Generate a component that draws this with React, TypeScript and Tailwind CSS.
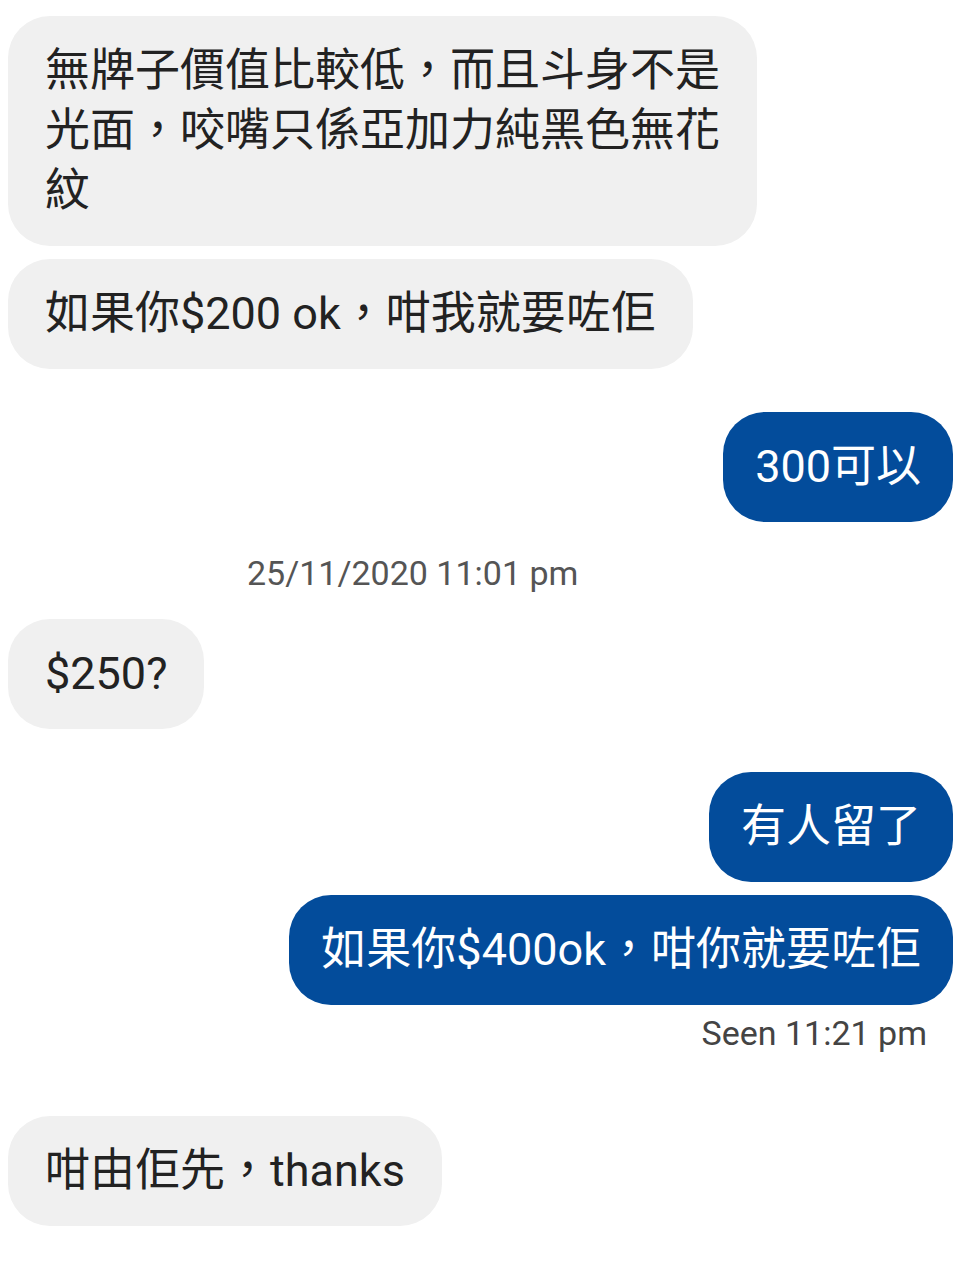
import React from 'react';

type Msg =
  | { kind: 'in' | 'out'; text: string; mt: string }
  | { kind: 'time'; text: string; mt: string }
  | { kind: 'seen'; text: string; mt: string };

const messages: Msg[] = [
  { kind: 'in', text: '無牌子價值比較低，而且斗身不是光面，咬嘴只係亞加力純黑色無花紋', mt: 'mt-0' },
  { kind: 'in', text: '如果你$200 ok，咁我就要咗佢', mt: 'mt-[13px]' },
  { kind: 'out', text: '300可以', mt: 'mt-[43px]' },
  { kind: 'time', text: '25/11/2020 11:01 pm', mt: 'mt-[31px]' },
  { kind: 'in', text: '$250?', mt: 'mt-[26px]' },
  { kind: 'out', text: '有人留了', mt: 'mt-[43px]' },
  { kind: 'out', text: '如果你$400ok，咁你就要咗佢', mt: 'mt-[13px]' },
  { kind: 'seen', text: 'Seen 11:21 pm', mt: 'mt-[8px]' },
  { kind: 'in', text: '咁由佢先，thanks', mt: 'mt-[63px]' },
];

const font = { fontFamily: 'Roboto, "Noto Sans CJK TC", sans-serif' };

export default function App() {
  return (
    <div className="min-h-[1274px] w-[977px] bg-white pt-[16px]" style={font}>
      <div className="flex flex-col">
        {messages.map((m, i) => {
          if (m.kind === 'time') {
            return (
              <div key={i} className={`${m.mt} pl-[247px] text-[34px] leading-[40px] text-[#555555]`}>
                {m.text}
              </div>
            );
          }
          if (m.kind === 'seen') {
            return (
              <div key={i} className={`${m.mt} self-end pr-[50px] text-[34px] leading-[40px] text-[#444444]`}>
                {m.text}
              </div>
            );
          }
          if (m.kind === 'in') {
            return (
              <div key={i} className={`${m.mt} ml-[8px] w-fit max-w-[749px] rounded-[42px] bg-[#f0f0f0] px-[37px] py-[25px] text-[45px] leading-[60px] text-[#222222]`}>
                {m.text}
              </div>
            );
          }
          return (
            <div key={i} className={`${m.mt} mr-[24px] w-fit self-end rounded-[42px] bg-[#034c9b] px-[32px] py-[25px] text-[45px] leading-[60px] text-white`}>
              {m.text}
            </div>
          );
        })}
      </div>
    </div>
  );
}
